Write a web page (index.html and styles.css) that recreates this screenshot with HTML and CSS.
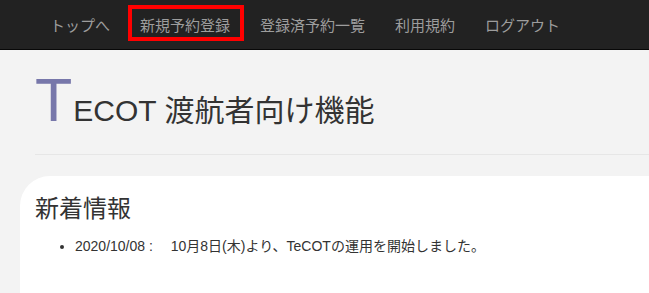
FILE: index.html
```html
<!DOCTYPE html>
<html lang="ja">
<head>
<meta charset="utf-8">
<title>TECOT 渡航者向け機能</title>
<link rel="stylesheet" href="styles.css">
</head>
<body>
<nav class="navbar">
  <ul class="nav-list">
    <li><a class="nav-link" href="#">トップへ</a></li>
    <li><a class="nav-link nav-link-marked" href="#">新規予約登録</a></li>
    <li><a class="nav-link" href="#">登録済予約一覧</a></li>
    <li><a class="nav-link" href="#">利用規約</a></li>
    <li><a class="nav-link" href="#">ログアウト</a></li>
  </ul>
</nav>
<header class="page-header">
  <h1 class="title"><span class="title-initial">T</span><span class="title-rest">ECOT 渡航者向け機能</span></h1>
</header>
<main class="card">
  <h2 class="card-title">新着情報</h2>
  <ul class="news-list">
    <li>2020/10/08 : 　10月8日(木)より、TeCOTの運用を開始しました。</li>
  </ul>
</main>
</body>
</html>
```

FILE: styles.css
```css
html, body {
  margin: 0;
  padding: 0;
}
body {
  background: #f3f3f3;
  font-family: "Liberation Sans", "Noto Sans CJK JP", sans-serif;
  color: #333333;
  overflow: hidden;
}
.navbar {
  background: #222222;
  height: 49px;
  border-bottom: 1px solid #080808;
}
.nav-list {
  list-style: none;
  margin: 0;
  padding: 0 0 0 35px;
  display: flex;
  align-items: center;
  height: 100%;
}
.nav-link {
  position: relative;
  display: block;
  padding: 0 15px;
  line-height: 20px;
  font-size: 15px;
  font-family: "Noto Sans CJK JP", sans-serif;
  color: #9d9d9d;
  text-decoration: none;
}
.nav-link-marked::after {
  content: "";
  position: absolute;
  left: 3px;
  right: 1px;
  top: -10px;
  height: 28px;
  border: 4px solid #ff0000;
}
.page-header {
  margin: 0 0 0 35px;
  padding: 20px 0 0;
  border-bottom: 1px solid #e6e6e6;
  height: 105px;
  box-sizing: border-box;
}
.title {
  margin: 0;
  display: flex;
  align-items: baseline;
  font-weight: normal;
}
.title-initial {
  font-size: 61px;
  line-height: 61px;
  color: #7777aa;
}
.title-rest {
  font-size: 30px;
  line-height: 40px;
  color: #333333;
  margin-left: 1px;
}
.card {
  display: block;
  box-sizing: border-box;
  background: #ffffff;
  margin: 21px 0 0 20px;
  border-top-left-radius: 30px;
  padding: 16px 0 0 15px;
  height: 117px;
}
.card-title {
  margin: 0;
  font-size: 24px;
  font-weight: normal;
  line-height: 30px;
  font-family: "Noto Sans CJK JP", sans-serif;
}
.news-list {
  margin: 14px 0 0;
  padding: 0 0 0 40px;
  font-size: 14px;
  line-height: 20px;
}
```
